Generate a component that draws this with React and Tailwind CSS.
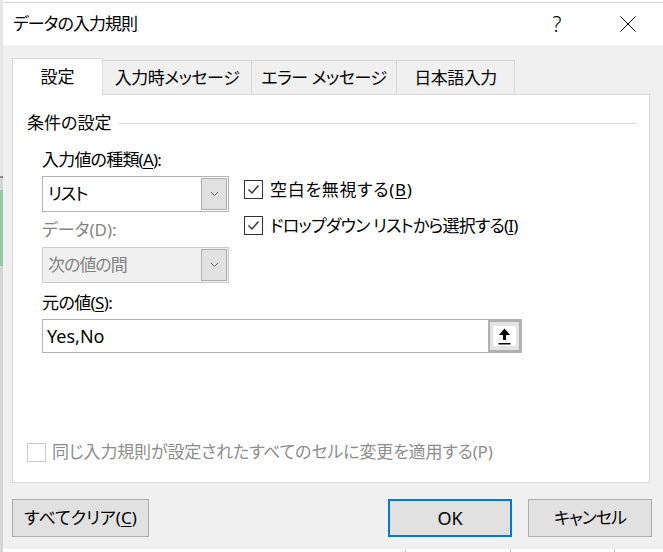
import React from 'react';

// small "v" used in the combo buttons
function Chevron() {
  return (
    <svg width="9" height="6" viewBox="0 0 9 6" fill="none">
      <path d="M1 1L4.5 4.5L8 1" stroke="#606060" strokeWidth="1" />
    </svg>
  );
}

function CheckBox({ checked, disabled }) {
  return (
    <div className={`flex h-[19px] w-[19px] shrink-0 items-center justify-center border bg-white ${disabled ? 'border-[#cccccc]' : 'border-[#333333]'}`}>
      {checked && (
        <svg width="17" height="17" viewBox="0 0 17 17" fill="none">
          <path d="M3.5 8.5L7 12L13.5 4.5" stroke="#333333" strokeWidth="1.4" />
        </svg>
      )}
    </div>
  );
}

function Combo({ value, disabled }) {
  return (
    <div className={`flex h-[36px] w-[187px] border p-px ${disabled ? 'border-[#cccccc] bg-[#f0f0f0] text-[#838383]' : 'border-[#b4b4b4] bg-white'}`}>
      <div className="flex flex-1 items-center pl-[4px] tracking-[-1px]">{value}</div>
      <div className="flex w-[26px] items-center justify-center border border-[#adadad] bg-[#e1e1e1]">
        <Chevron />
      </div>
    </div>
  );
}

function UpArrow() {
  return (
    <svg width="13" height="17" viewBox="0 0 13 17" fill="none">
      <path d="M6.5 0.5L12 7H8V12H5V7H1Z" fill="#000" />
      <rect x="0.5" y="15" width="12" height="1.5" fill="#000" />
    </svg>
  );
}

const tabs = [
  { label: '入力時メッセージ', w: 'w-[149px]' },
  { label: 'エラー メッセージ', w: 'w-[145px]' },
  { label: '日本語入力', w: 'w-[118px]' },
];

export default function App() {
  return (
    <div className="flex h-[552px] w-[663px] overflow-hidden bg-white font-['Noto_Sans','Noto_Sans_CJK_JP',sans-serif] text-[17px] leading-[24px] text-black [font-feature-settings:'palt']">
      {/* sheet behind the dialog */}
      <div className="flex w-[3px] flex-col">
        <div className="h-[176px] bg-[#e6e6e6]" />
        <div className="h-[2px] bg-[#8a8a8a]" />
        <div className="h-[12px] bg-[#d6d6d6]" />
        <div className="h-[76px] bg-[#92c9a5]" />
        <div className="flex-1 bg-[#d6d6d6]" />
      </div>

      <div className="flex flex-1 flex-col">
        <div className="h-[3px] border-b border-[#d6d6d6] bg-white" />

        <div className="flex h-[546px] flex-col bg-[#f0f0f0]">
          {/* title bar */}
          <div className="flex h-[42px] items-center bg-white">
            <div className="flex-1 pl-[10px] tracking-[-1px]">データの入力規則</div>
            <div className="w-[20px] text-center text-[21px] font-light leading-[24px]">?</div>
            <div className="ml-[53px] mr-[27px] flex w-[16px] justify-center">
              <svg width="16" height="16" viewBox="0 0 16 16" fill="none">
                <path d="M0.5 0.5L15.5 15.5M15.5 0.5L0.5 15.5" stroke="#000" strokeWidth="1" />
              </svg>
            </div>
          </div>

          <div className="flex flex-1 flex-col pl-[9px] pr-[11px] pt-[13px]">
            {/* tabs */}
            <div className="relative z-10 mb-[-1px] flex h-[37px] items-end">
              <div className="flex h-[37px] w-[91px] items-center justify-center border-x border-t border-[#d9d9d9] bg-white">
                設定
              </div>
              {tabs.map(t => (
                <div key={t.label} className={`flex h-[35px] items-center justify-center border-y border-r border-[#d9d9d9] bg-[#f0f0f0] tracking-[-0.5px] ${t.w}`}>
                  {t.label}
                </div>
              ))}
            </div>

            {/* panel */}
            <div className="mr-[2px] flex h-[389px] flex-col border border-[#d9d9d9] bg-white pt-[16px]">
              <div className="flex h-[24px] items-center pl-[14px] pr-[12px]">
                <span>条件の設定</span>
                <div className="ml-[7px] h-px flex-1 bg-[#dcdcdc]" />
              </div>

              <div className="flex flex-col pl-[29px]">
                <div className="mt-[13px] tracking-[-0.8px]">
                  入力値の種類(<span className="underline underline-offset-2">A</span>):
                </div>
                <div className="mt-[4px] flex items-start">
                  <div className="flex flex-col">
                    <Combo value="リスト" />
                    <div className="mt-[6px] text-[#838383]">データ(D):</div>
                    <div className="mt-[5px]">
                      <Combo value="次の値の間" disabled />
                    </div>
                  </div>
                  <div className="ml-[15px] mt-[4px] flex flex-col">
                    <div className="flex h-[19px] items-center gap-[7px]">
                      <CheckBox checked />
                      <span className="tracking-[0.7px]">空白を無視する(<span className="underline underline-offset-2">B</span>)</span>
                    </div>
                    <div className="mt-[17px] flex h-[19px] items-center gap-[7px]">
                      <CheckBox checked />
                      <span className="tracking-[-0.8px]">ドロップダウン リストから選択する(<span className="underline underline-offset-2">I</span>)</span>
                    </div>
                  </div>
                </div>

                <div className="mt-[8px] tracking-[-0.6px]">
                  元の値(<span className="underline underline-offset-2">S</span>):
                </div>
                <div className="mt-[4px] flex h-[34px] w-[480px] border border-[#b4b4b4] bg-white">
                  <div className="flex flex-1 items-center pl-[4px] text-[18px]">Yes,No</div>
                  <div className="flex w-[33px] items-center justify-center border-2 border-[#b0b0b0] bg-[#e3e3e3]">
                    <div className="flex h-[20px] w-[23px] items-center justify-center bg-white">
                      <UpArrow />
                    </div>
                  </div>
                </div>
              </div>

              <div className="mt-[87px] flex h-[24px] items-center gap-[6px] pl-[14px] text-[#8d8d8d]">
                <CheckBox disabled />
                <span className="tracking-[-0.15px]">同じ入力規則が設定されたすべてのセルに変更を適用する(P)</span>
              </div>
            </div>

            {/* buttons */}
            <div className="mt-[16px] flex h-[38px]">
              <button className="w-[137px] border border-[#adadad] bg-[#e1e1e1]">
                すべてクリア(<span className="underline underline-offset-2">C</span>)
              </button>
              <div className="flex-1" />
              <button className="w-[124px] border-2 border-[#0078d7] bg-[#e1e1e1] text-[18px]">OK</button>
              <button className="ml-[16px] w-[124px] border border-[#adadad] bg-[#e1e1e1] tracking-[-1px]">キャンセル</button>
            </div>
          </div>
        </div>

        <div className="flex h-[3px] bg-white">
          <div className="ml-[402px] w-px bg-[#c8c8c8]" />
          <div className="ml-[104px] w-px bg-[#c8c8c8]" />
          <div className="ml-[103px] w-px bg-[#c8c8c8]" />
        </div>
      </div>
    </div>
  );
}
